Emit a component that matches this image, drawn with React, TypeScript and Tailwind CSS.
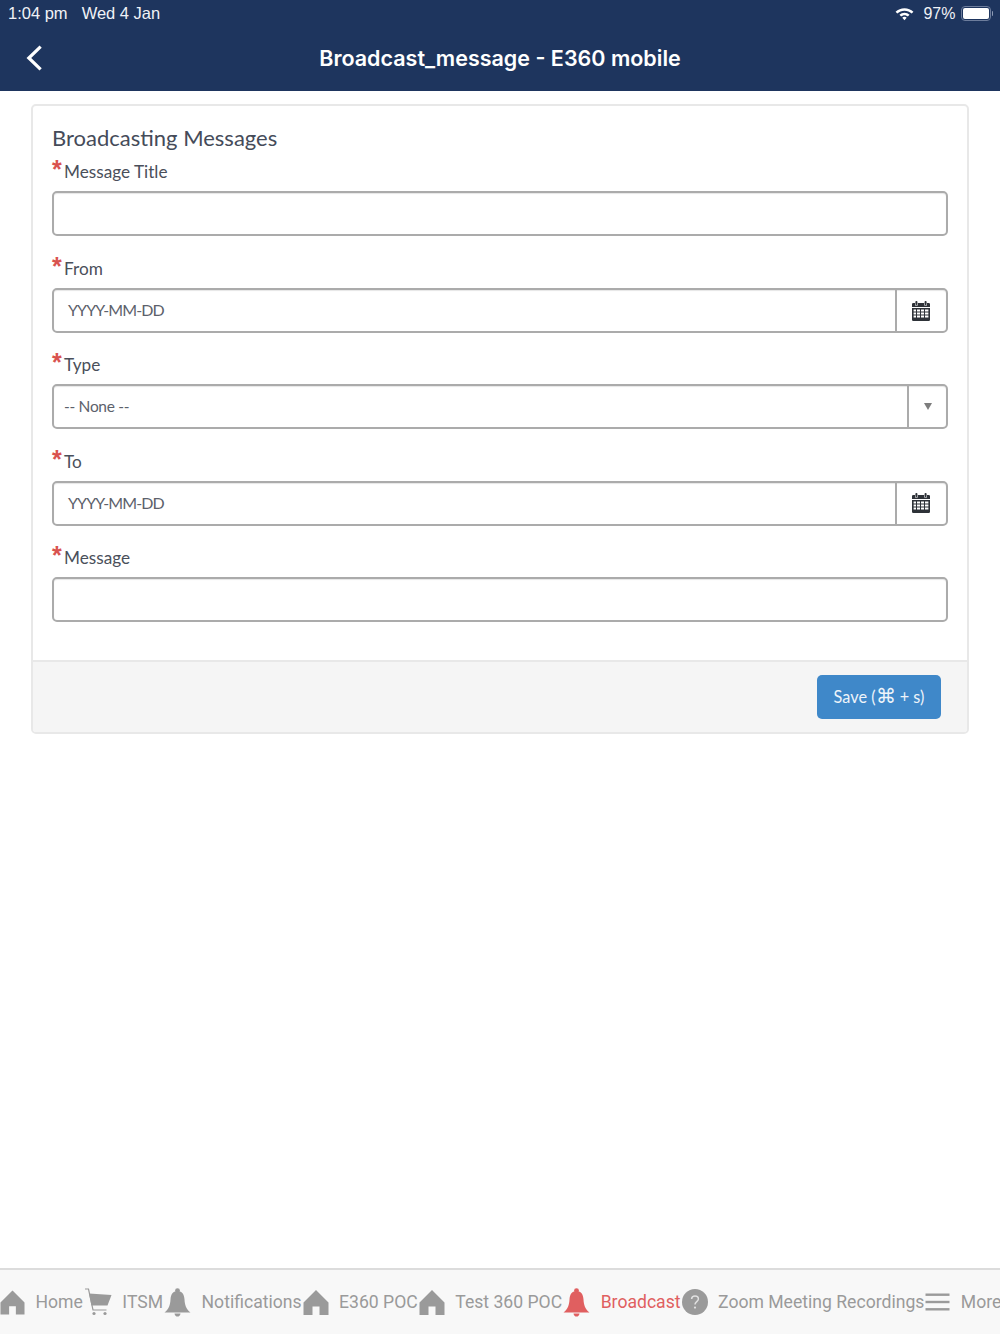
import type { ReactNode } from "react";

const HomeIcon = ({ className }: { className?: string }) => (
  <svg viewBox="0 0 26 26" className={className} fill="currentColor">
    <path d="M13 1 L25.5 13.5 V26 H16.5 V17.5 H9.5 V26 H0.5 V13.5 Z" />
  </svg>
);

const CartIcon = ({ className }: { className?: string }) => (
  <svg viewBox="0 0 28 28" className={className} fill="none">
    <path d="M1 1 H4.5 L9 22 H22.5" stroke="currentColor" strokeWidth="1.2" />
    <path d="M5 5.5 L27.5 7 L23.5 17.5 H7.5 Z" fill="currentColor" />
    <circle cx="10" cy="25.5" r="1.6" fill="currentColor" />
    <circle cx="21" cy="25.5" r="1.6" fill="currentColor" />
  </svg>
);

const BellIcon = ({ className }: { className?: string }) => (
  <svg viewBox="0 0 27 29" className={className} fill="currentColor">
    <circle cx="13.5" cy="2.6" r="2.4" />
    <path d="M13.5 3 C8.5 3 6.8 7 6.5 11.5 C6.2 17 5 21 0.5 24.5 H26.5 C22 21 20.8 17 20.5 11.5 C20.2 7 18.5 3 13.5 3 Z" />
    <path d="M10.5 25.5 H16.5 C16.3 27.6 15 28.6 13.5 28.6 C12 28.6 10.7 27.6 10.5 25.5 Z" />
  </svg>
);

const HelpIcon = ({ className }: { className?: string }) => (
  <svg viewBox="0 0 26 26" className={className}>
    <circle cx="13" cy="13" r="13" fill="currentColor" />
    <path d="M9.6 10 C9.7 8 11.1 7 13 7 C15 7 16.4 8.2 16.4 10 C16.4 12.6 13 12.6 13 15.4" fill="none" stroke="#f8f8f8" strokeOpacity="0.75" strokeWidth="1.5" />
    <circle cx="13" cy="18.6" r="1.1" fill="#f8f8f8" fillOpacity="0.75" />
  </svg>
);

const MenuIcon = ({ className }: { className?: string }) => (
  <svg viewBox="0 0 25 18" className={className} fill="currentColor">
    <rect x="0.5" y="0.5" width="24" height="2.4" />
    <rect x="0.5" y="7.8" width="24" height="2.4" />
    <rect x="0.5" y="15.1" width="24" height="2.4" />
  </svg>
);

const CalendarIcon = () => (
  <svg viewBox="0 0 18 20" className="h-[20px] w-[18px] text-[#2e3238]" fill="currentColor">
    <rect x="3.4" y="0" width="2" height="4" rx="0.8" />
    <rect x="12.6" y="0" width="2" height="4" rx="0.8" />
    <path d="M1.2 2 H3 V4.4 H5.8 V2 H12.2 V4.4 H15 V2 H16.8 A1.2 1.2 0 0 1 18 3.2 V6 H0 V3.2 A1.2 1.2 0 0 1 1.2 2 Z" />
    <path
      fillRule="evenodd"
      d="M0 7 H18 V18.8 A1.2 1.2 0 0 1 16.8 20 H1.2 A1.2 1.2 0 0 1 0 18.8 Z M1.6 8.6 V10.6 H4 V8.6 Z M5 8.6 V10.6 H8 V8.6 Z M9 8.6 V10.6 H12 V8.6 Z M13 8.6 V10.6 H16.4 V8.6 Z M1.6 11.6 V13.6 H4 V11.6 Z M5 11.6 V13.6 H8 V11.6 Z M9 11.6 V13.6 H12 V11.6 Z M13 11.6 V13.6 H16.4 V11.6 Z M1.6 14.6 V16.6 H4 V14.6 Z M5 14.6 V16.6 H8 V14.6 Z M9 14.6 V16.6 H12 V14.6 Z M13 14.6 V16.6 H16.4 V14.6 Z"
    />
  </svg>
);

function Field({ label, children, className }: { label: string; children: ReactNode; className?: string }) {
  return (
    <div className={className}>
      <div className="flex h-[31px] items-end">
        <span className="h-[26px] w-[12px] font-['Liberation_Sans',sans-serif] text-[25px] font-bold leading-[22px] text-[#d9534f]">*</span>
        <label className="text-[17.2px] leading-[24px] text-[#4a4f5a]">{label}</label>
      </div>
      {children}
    </div>
  );
}

const boxClass = "mt-[7px] flex h-[45px] overflow-hidden rounded-[5px] border-2 border-[#ababab] bg-white shadow-[inset_0_1px_1px_rgba(0,0,0,0.1)]";

function DateField({ label, className }: { label: string; className?: string }) {
  return (
    <Field label={label} className={className}>
      <div className={boxClass}>
        <div className="flex flex-1 items-center pb-px pl-[14px] text-[16px] tracking-[-0.9px] text-[#5c616b]">YYYY-MM-DD</div>
        <div className="flex w-[51px] items-center justify-center border-l-2 border-[#ababab] pr-[1px]">
          <CalendarIcon />
        </div>
      </div>
    </Field>
  );
}

function Tab({ icon, label, active }: { icon: ReactNode; label: string; active?: boolean }) {
  return (
    <div className={`flex shrink-0 items-center gap-[10.5px] ${active ? "text-[#e05f60]" : "text-[#9a9a9a]"}`}>
      {icon}
      <span className="whitespace-nowrap font-['Roboto',sans-serif] text-[17.6px]">{label}</span>
    </div>
  );
}

export default function App() {
  return (
    <div className="flex h-[1334px] w-[1000px] flex-col overflow-hidden bg-white font-['Lato',sans-serif]">
      {/* Status bar + nav */}
      <header className="h-[91px] shrink-0 bg-[#1e355e] text-white">
        <div className="flex h-[27px] items-center justify-between pl-[8px] pr-[7px] font-['Liberation_Sans',sans-serif] text-[16.5px] text-[#f0f2f6]">
          <div className="flex gap-[14px]">
            <span>1:04 pm</span>
            <span>Wed 4 Jan</span>
          </div>
          <div className="flex items-center gap-[9px]">
            <svg viewBox="0 0 20 15" className="h-[15px] w-[19px]" fill="white">
              <path d="M10 2 C13.6 2 16.9 3.4 19.4 5.7 L17.6 7.6 C15.6 5.7 12.9 4.6 10 4.6 C7.1 4.6 4.4 5.7 2.4 7.6 L0.6 5.7 C3.1 3.4 6.4 2 10 2 Z" />
              <path d="M10 6.7 C12 6.7 13.9 7.5 15.3 8.8 L13.5 10.7 C12.5 9.9 11.3 9.3 10 9.3 C8.7 9.3 7.5 9.9 6.5 10.7 L4.7 8.8 C6.1 7.5 8 6.7 10 6.7 Z" />
              <path d="M10 11 C10.9 11 11.7 11.4 12.3 11.9 L10 14.5 L7.7 11.9 C8.3 11.4 9.1 11 10 11 Z" />
            </svg>
            <div className="flex items-center gap-[5px]">
              <span className="text-[16px]">97%</span>
              <div className="flex items-center gap-[1px]">
                <div className="flex h-[15px] w-[30px] items-center rounded-[4px] border border-[#6d7d9c] p-[1px]">
                  <div className="h-full w-[26px] rounded-[2px] bg-white" />
                </div>
                <div className="h-[5px] w-[1.5px] rounded-r-sm bg-[#8c9ab4]" />
              </div>
            </div>
          </div>
        </div>
        <div className="relative flex h-[64px] items-center justify-center">
          <svg viewBox="0 0 18 28" className="absolute left-[26px] top-[17px] h-[28px] w-[17px]" fill="none" stroke="white" strokeWidth="3.4">
            <path d="M15.5 2 L3 14 L15.5 26" />
          </svg>
          <h1 className="pb-[2px] font-['Inter',sans-serif] text-[21.5px] font-semibold">Broadcast_message - E360 mobile</h1>
        </div>
      </header>

      {/* Form card */}
      <main className="flex-1 px-[31px] pt-[13px]">
        <section className="h-[630px] overflow-hidden rounded-[5px] border-2 border-[#e8e8e8]">
          <div className="h-[554px] px-[19px] pt-[15px]">
            <h2 className="text-[22px] leading-[33px] text-[#454b59]">Broadcasting Messages</h2>
            <Field label="Message Title" className="-mt-[1px]">
              <div className={boxClass} />
            </Field>
            <DateField label="From" className="mt-[14px]" />
            <Field label="Type" className="mt-[13.4px]">
              <div className={boxClass}>
                <div className="flex flex-1 items-center pb-px pl-[10px] text-[15.5px] tracking-[-0.3px] text-[#5c616b]">-- None --</div>
                <div className="flex w-[39px] items-center justify-center border-l-2 border-[#ababab]">
                  <div className="h-0 w-0 border-x-[4.5px] border-t-[7px] border-x-transparent border-t-[#7d7d7d]" />
                </div>
              </div>
            </Field>
            <DateField label="To" className="mt-[13.5px]" />
            <Field label="Message" className="mt-[13px]">
              <div className={boxClass} />
            </Field>
          </div>
          <div className="flex h-[72px] items-start justify-end border-t-2 border-[#e8e8e8] bg-[#f5f5f5] pr-[26px] pt-[13px]">
            <button className="h-[44px] w-[124px] rounded-[5px] bg-[#3f88c9] text-[16.3px] text-[#eef4fa]">
              Save (<span className="text-[20px] leading-none">⌘</span> + s)
            </button>
          </div>
        </section>
      </main>

      {/* Bottom tabs */}
      <nav className="flex h-[66px] shrink-0 items-center gap-px overflow-hidden border-t-2 border-[#dcdcdc] bg-[#f8f8f8]">
        <Tab icon={<HomeIcon className="h-[26px] w-[25px]" />} label="Home" />
        <Tab icon={<CartIcon className="h-[28px] w-[28px]" />} label="ITSM" />
        <Tab icon={<BellIcon className="h-[29px] w-[27px]" />} label="Notifications" />
        <Tab icon={<HomeIcon className="h-[26px] w-[26px]" />} label="E360 POC" />
        <Tab icon={<HomeIcon className="h-[26px] w-[26px]" />} label="Test 360 POC" />
        <Tab icon={<BellIcon className="h-[29px] w-[27px]" />} label="Broadcast" active />
        <Tab icon={<HelpIcon className="h-[26px] w-[26px]" />} label="Zoom Meeting Recordings" />
        <Tab icon={<MenuIcon className="h-[18px] w-[25px]" />} label="More" />
      </nav>
    </div>
  );
}
